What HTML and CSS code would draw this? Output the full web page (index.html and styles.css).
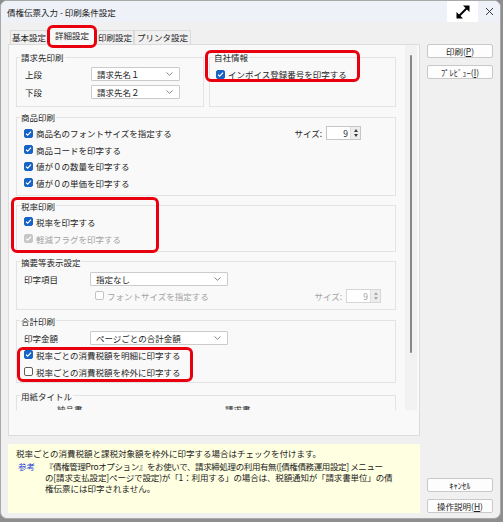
FILE: index.html
```html
<!DOCTYPE html>
<html lang="ja">
<head>
<meta charset="utf-8">
<title>債権伝票入力 - 印刷条件設定</title>
<link rel="stylesheet" href="styles.css">
</head>
<body>
<div class="window">
  <header class="titlebar">
    <span class="title">債権伝票入力 - 印刷条件設定</span>
    <span class="tb-max">
      <svg width="16" height="16" viewBox="0 0 16 16">
        <line x1="4.5" y1="11.5" x2="11.5" y2="4.5" stroke="#000" stroke-width="2"/>
        <polygon points="8,1.5 14.5,1.5 14.5,8" fill="#000"/>
        <polygon points="1.5,8 1.5,14.5 8,14.5" fill="#000"/>
      </svg>
    </span>
    <span class="tb-close">
      <svg width="9" height="9" viewBox="0 0 9 9">
        <path d="M1 1 8 8M8 1 1 8" stroke="#3a3a3a" stroke-width="1"/>
      </svg>
    </span>
  </header>

  <div class="client">
    <div class="main">
      <div class="tabs">
        <span class="tab">基本設定</span>
        <span class="tab active">詳細設定<span class="mark mark-tab"></span></span>
        <span class="tab">印刷設定</span>
        <span class="tab last">プリンタ設定</span>
      </div>

      <div class="panel">
        <div class="scroller">
          <div class="pages">
            <div class="group-row">
              <fieldset class="group g-billing">
                <legend>請求先印刷</legend>
                <div class="rows">
                  <div class="row">
                    <span class="lbl">上段</span>
                    <span class="combo w-short">請求先名１<svg class="chev" width="7" height="4" viewBox="0 0 7 4"><path d="M0.5 0.5 3.5 3.3 6.5 0.5" fill="none" stroke="#777" stroke-width="0.9"/></svg></span>
                  </div>
                  <div class="row">
                    <span class="lbl">下段</span>
                    <span class="combo w-short">請求先名２<svg class="chev" width="7" height="4" viewBox="0 0 7 4"><path d="M0.5 0.5 3.5 3.3 6.5 0.5" fill="none" stroke="#777" stroke-width="0.9"/></svg></span>
                  </div>
                </div>
              </fieldset>
              <fieldset class="group g-company">
                <legend>自社情報</legend>
                <div class="rows">
                  <span class="mark mark-company"></span>
                  <div class="row">
                    <span class="cb on"><svg width="9" height="9" viewBox="0 0 9 9"><path d="M2 4.6 3.7 6.2 7 2.7" fill="none" stroke="#fff" stroke-width="1.2"/></svg></span>
                    <span class="cb-text">インボイス登録番号を印字する</span>
                  </div>
                </div>
              </fieldset>
            </div>

            <fieldset class="group g-goods">
              <legend>商品印刷</legend>
              <div class="rows">
                <div class="row">
                  <span class="cb on"><svg width="9" height="9" viewBox="0 0 9 9"><path d="M2 4.6 3.7 6.2 7 2.7" fill="none" stroke="#fff" stroke-width="1.2"/></svg></span>
                  <span class="cb-text">商品名のフォントサイズを指定する</span>
                  <span class="size-ctl">
                    <span>サイズ:</span>
                    <span class="spin"><span class="spin-val">9</span><span class="spin-btns"><i class="up"></i><i class="down"></i></span></span>
                  </span>
                </div>
                <div class="row">
                  <span class="cb on"><svg width="9" height="9" viewBox="0 0 9 9"><path d="M2 4.6 3.7 6.2 7 2.7" fill="none" stroke="#fff" stroke-width="1.2"/></svg></span>
                  <span class="cb-text">商品コードを印字する</span>
                </div>
                <div class="row">
                  <span class="cb on"><svg width="9" height="9" viewBox="0 0 9 9"><path d="M2 4.6 3.7 6.2 7 2.7" fill="none" stroke="#fff" stroke-width="1.2"/></svg></span>
                  <span class="cb-text">値が０の数量を印字する</span>
                </div>
                <div class="row">
                  <span class="cb on"><svg width="9" height="9" viewBox="0 0 9 9"><path d="M2 4.6 3.7 6.2 7 2.7" fill="none" stroke="#fff" stroke-width="1.2"/></svg></span>
                  <span class="cb-text">値が０の単価を印字する</span>
                </div>
              </div>
            </fieldset>

            <fieldset class="group g-tax">
              <legend>税率印刷</legend>
              <div class="rows">
                <span class="mark mark-tax"></span>
                <div class="row">
                  <span class="cb on"><svg width="9" height="9" viewBox="0 0 9 9"><path d="M2 4.6 3.7 6.2 7 2.7" fill="none" stroke="#fff" stroke-width="1.2"/></svg></span>
                  <span class="cb-text">税率を印字する</span>
                </div>
                <div class="row">
                  <span class="cb on off"><svg width="9" height="9" viewBox="0 0 9 9"><path d="M2 4.6 3.7 6.2 7 2.7" fill="none" stroke="#fff" stroke-width="1.2"/></svg></span>
                  <span class="cb-text dim">軽減フラグを印字する</span>
                </div>
              </div>
            </fieldset>

            <fieldset class="group g-memo">
              <legend>摘要等表示設定</legend>
              <div class="rows">
                <div class="row">
                  <span class="lbl">印字項目</span>
                  <span class="combo w-long">指定なし<svg class="chev" width="7" height="4" viewBox="0 0 7 4"><path d="M0.5 0.5 3.5 3.3 6.5 0.5" fill="none" stroke="#777" stroke-width="0.9"/></svg></span>
                </div>
                <div class="row indent">
                  <span class="cb off"></span>
                  <span class="cb-text dim">フォントサイズを指定する</span>
                  <span class="size-ctl dim">
                    <span>サイズ:</span>
                    <span class="spin off"><span class="spin-val">9</span><span class="spin-btns"><i class="up"></i><i class="down"></i></span></span>
                  </span>
                </div>
              </div>
            </fieldset>

            <fieldset class="group g-total">
              <legend>合計印刷</legend>
              <div class="rows">
                <div class="row">
                  <span class="lbl">印字金額</span>
                  <span class="combo w-long">ページごとの合計金額<svg class="chev" width="7" height="4" viewBox="0 0 7 4"><path d="M0.5 0.5 3.5 3.3 6.5 0.5" fill="none" stroke="#777" stroke-width="0.9"/></svg></span>
                </div>
                <div class="check-pair">
                  <span class="mark mark-total"></span>
                  <div class="row">
                    <span class="cb on"><svg width="9" height="9" viewBox="0 0 9 9"><path d="M2 4.6 3.7 6.2 7 2.7" fill="none" stroke="#fff" stroke-width="1.2"/></svg></span>
                    <span class="cb-text">税率ごとの消費税額を明細に印字する</span>
                  </div>
                  <div class="row">
                    <span class="cb"></span>
                    <span class="cb-text">税率ごとの消費税額を枠外に印字する</span>
                  </div>
                </div>
              </div>
            </fieldset>

            <fieldset class="group g-paper">
              <legend>用紙タイトル</legend>
              <div class="rows">
                <div class="row">
                  <span class="paper-a">納品書</span>
                  <span>請求書</span>
                </div>
              </div>
            </fieldset>
          </div>
          <div class="vscroll"><span class="thumb"></span></div>
        </div>
      </div>

      <div class="help">
        <div class="help-line">税率ごとの消費税額と課税対象額を枠外に印字する場合はチェックを付けます。</div>
        <div class="help-ref">
          <span class="ref-tag">参考</span>
          <span class="ref-text">
            <span class="ref-line tight">『債権管理Proオプション』をお使いで、請求締処理の利用有無([債権債務運用設定] メニュー</span>
            <span class="ref-line snug">の[請求支払設定]ページで設定)が「1：利用する」の場合は、税額通知が「請求書単位」の債</span>
            <span class="ref-line">権伝票には印字されません。</span>
          </span>
        </div>
      </div>
    </div>

    <div class="side">
      <div class="btn-group">
        <span class="btn">印刷(<u>P</u>)</span>
        <span class="btn">ﾌﾟﾚﾋﾞｭｰ(<u>I</u>)</span>
      </div>
      <div class="btn-group">
        <span class="btn">ｷｬﾝｾﾙ</span>
        <span class="btn">操作説明(<u>H</u>)</span>
      </div>
    </div>
  </div>
</div>
</body>
</html>
```

FILE: styles.css
```css
* { box-sizing: border-box; }

html, body { margin: 0; padding: 0; }
html { background: #8e8e8e; }

body {
  width: 503px;
  height: 522px;
  overflow: hidden;
  font-family: "Noto Sans CJK JP", "Noto Sans", sans-serif;
  font-size: 8.5px;
  line-height: 10px;
  color: #1e1e1e;
}

/* dialog frame */
.window {
  width: 501px;
  height: 519px;
  background: #f0f0f0;
  border: 1px solid #a9a9a9;
  border-radius: 7px;
  overflow: hidden;
  display: flex;
  flex-direction: column;
}

.titlebar {
  height: 21px;
  flex: none;
  display: flex;
  align-items: center;
  background: #eef2f8;
}
.title { flex: 1; padding-left: 6px; color: #1a1a1a; }
.tb-max {
  width: 31px;
  height: 21px;
  background: #ffffff;
  display: flex;
  align-items: center;
  justify-content: center;
}
.tb-close {
  width: 22px;
  height: 21px;
  display: flex;
  align-items: center;
  justify-content: center;
}

.client {
  flex: 1;
  display: flex;
  gap: 7px;
  padding-left: 7px;
}

.main {
  width: 412px;
  display: flex;
  flex-direction: column;
}

/* tab strip */
.tabs {
  height: 22px;
  display: flex;
  align-items: flex-end;
  padding-left: 2px;
}
.tab {
  height: 14px;
  padding: 1px 1px 0;
  border: 1px solid #dadada;
  border-bottom: none;
  background: #f0f0f0;
  white-space: nowrap;
}
.tab.last { padding: 1px 2px 0; }
.tab.active {
  position: relative;
  z-index: 2;
  height: 18px;
  margin-bottom: -1px;
  padding: 2px 6px 0;
  background: #f9f9f9;
  border-color: #d2d2d2;
}

/* red callout frames */
.mark {
  position: absolute;
  border: 3px solid #e8000e;
  border-radius: 6px;
  z-index: 5;
  pointer-events: none;
}
.mark-tab { left: -2px; top: -3px; width: 50px; height: 23px; }
.mark-company { left: -8px; top: -12px; width: 155px; height: 32px; }
.mark-tax { left: -9px; top: -14px; width: 148px; height: 56px; }
.mark-total { left: -7px; top: -1px; width: 176px; height: 35px; }

/* tab page */
.panel {
  height: 392px;
  background: #f9f9f9;
  border: 1px solid #dcdcdc;
}
.scroller {
  height: 365px;
  display: flex;
}
.pages {
  flex: none;
  width: 396px;
  overflow: hidden;
  padding: 7px 9px 0 7px;
}
.vscroll {
  width: 12px;
  background: #f2f2f2;
  display: flex;
  justify-content: center;
  padding-top: 10px;
}
.thumb {
  width: 2px;
  height: 298px;
  border-radius: 1px;
  background: #878787;
}

/* group boxes */
.group-row {
  display: flex;
  gap: 5px;
  margin-bottom: 5px;
}
.group {
  margin: 0;
  min-width: 0;
  padding: 0 0 5px 3px;
  border: 1px solid #e3e3e3;
}
.group legend {
  padding: 0 1px;
  line-height: 10px;
  height: 10px;
}
.rows {
  position: relative;
  display: flex;
  flex-direction: column;
}
.row {
  height: 14px;
  display: flex;
  align-items: center;
  white-space: nowrap;
}
.lbl { width: 66px; flex: none; }

.g-billing { width: 188px; flex: none; padding-bottom: 7px; }
.g-billing .rows { padding: 5px 0 0 5px; gap: 4px; }

.g-company { flex: 1; padding-bottom: 7px; }
.g-company .rows { padding: 5px 0 0 3px; }

.g-goods { margin-bottom: 5px; }
.g-goods .rows { padding: 4px 34px 0 4px; gap: 2.67px; }

.g-tax { margin-bottom: 5px; }
.g-tax .rows { padding: 4px 0 0 4px; gap: 3px; }

.g-memo { margin-bottom: 6px; padding-bottom: 6px; }
.g-memo .rows { padding: 5px 14px 0 4px; gap: 3px; }
.row.indent { padding-left: 71px; }

.g-total { margin-bottom: 8px; padding-bottom: 3px; }
.g-total .rows { padding: 5px 0 0 4px; gap: 3px; }
.check-pair {
  position: relative;
  display: flex;
  flex-direction: column;
  gap: 3px;
}

.g-paper .rows { padding: 1px 0 0 0; }
.paper-a { margin-left: 37px; width: 168px; }

/* controls */
.cb {
  width: 9px;
  height: 9px;
  flex: none;
  border: 1px solid #5f5f5f;
  border-radius: 2px;
  background: #ffffff;
  display: flex;
}
.cb svg { margin: -1px; }
.cb.on { background: #1764c6; border-color: #1764c6; }
.cb.on.off { background: #c6c6c6; border-color: #c6c6c6; }
.cb.off { border-color: #c3c3c3; }
.cb-text { margin-left: 3px; }
.dim { color: #a3a3a3; }

.combo {
  height: 14px;
  display: flex;
  align-items: center;
  padding-left: 5px;
  background: #ffffff;
  border: 1px solid #cbcbcb;
  border-radius: 1px;
}
.combo .chev { margin-left: auto; margin-right: 6px; }
.w-short { width: 89px; }
.w-long { width: 138px; }

.size-ctl {
  margin-left: auto;
  display: flex;
  align-items: center;
  gap: 4px;
}
.spin {
  width: 35px;
  height: 14px;
  display: flex;
  justify-content: flex-end;
  align-items: center;
  background: #ffffff;
  border: 1px solid #c6c6c6;
  color: #1e1e1e;
}
.spin-val { padding-right: 2px; }
.spin-btns {
  width: 10px;
  height: 12px;
  display: flex;
  flex-direction: column;
  align-items: center;
  justify-content: center;
  gap: 2px;
  background: #ededed;
  border-left: 1px solid #dedede;
}
.spin-btns i {
  width: 0;
  height: 0;
  border-left: 2.5px solid transparent;
  border-right: 2.5px solid transparent;
}
.spin-btns .up { border-bottom: 3px solid #3c3c3c; }
.spin-btns .down { border-top: 3px solid #3c3c3c; }
.spin.off { border-color: #d6d6d6; color: #9d9d9d; }
.spin.off .up { border-bottom-color: #a8a8a8; }
.spin.off .down { border-top-color: #a8a8a8; }

/* help area */
.help {
  margin-top: 8px;
  height: 69px;
  background: #ffffe1;
  padding: 3.5px 0 0 8px;
  line-height: 11px;
  white-space: nowrap;
  color: #222222;
}
.help-ref {
  display: flex;
  margin-top: 2px;
}
.ref-tag {
  width: 27px;
  margin-left: 2px;
  flex: none;
  color: #1f3fd8;
}
.ref-text {
  display: flex;
  flex-direction: column;
}
.ref-line.tight { letter-spacing: -0.38px; }
.ref-line.snug { letter-spacing: -0.13px; }

/* command buttons */
.side {
  width: 66px;
  display: flex;
  flex-direction: column;
  justify-content: space-between;
  padding: 22px 0 5px;
}
.btn-group {
  display: flex;
  flex-direction: column;
  gap: 7px;
}
.btn {
  height: 14px;
  display: flex;
  align-items: center;
  justify-content: center;
  background: #fdfdfd;
  border: 1px solid #c9c9c9;
  border-radius: 2px;
  white-space: nowrap;
}
.btn u { text-underline-offset: 1px; }
```
